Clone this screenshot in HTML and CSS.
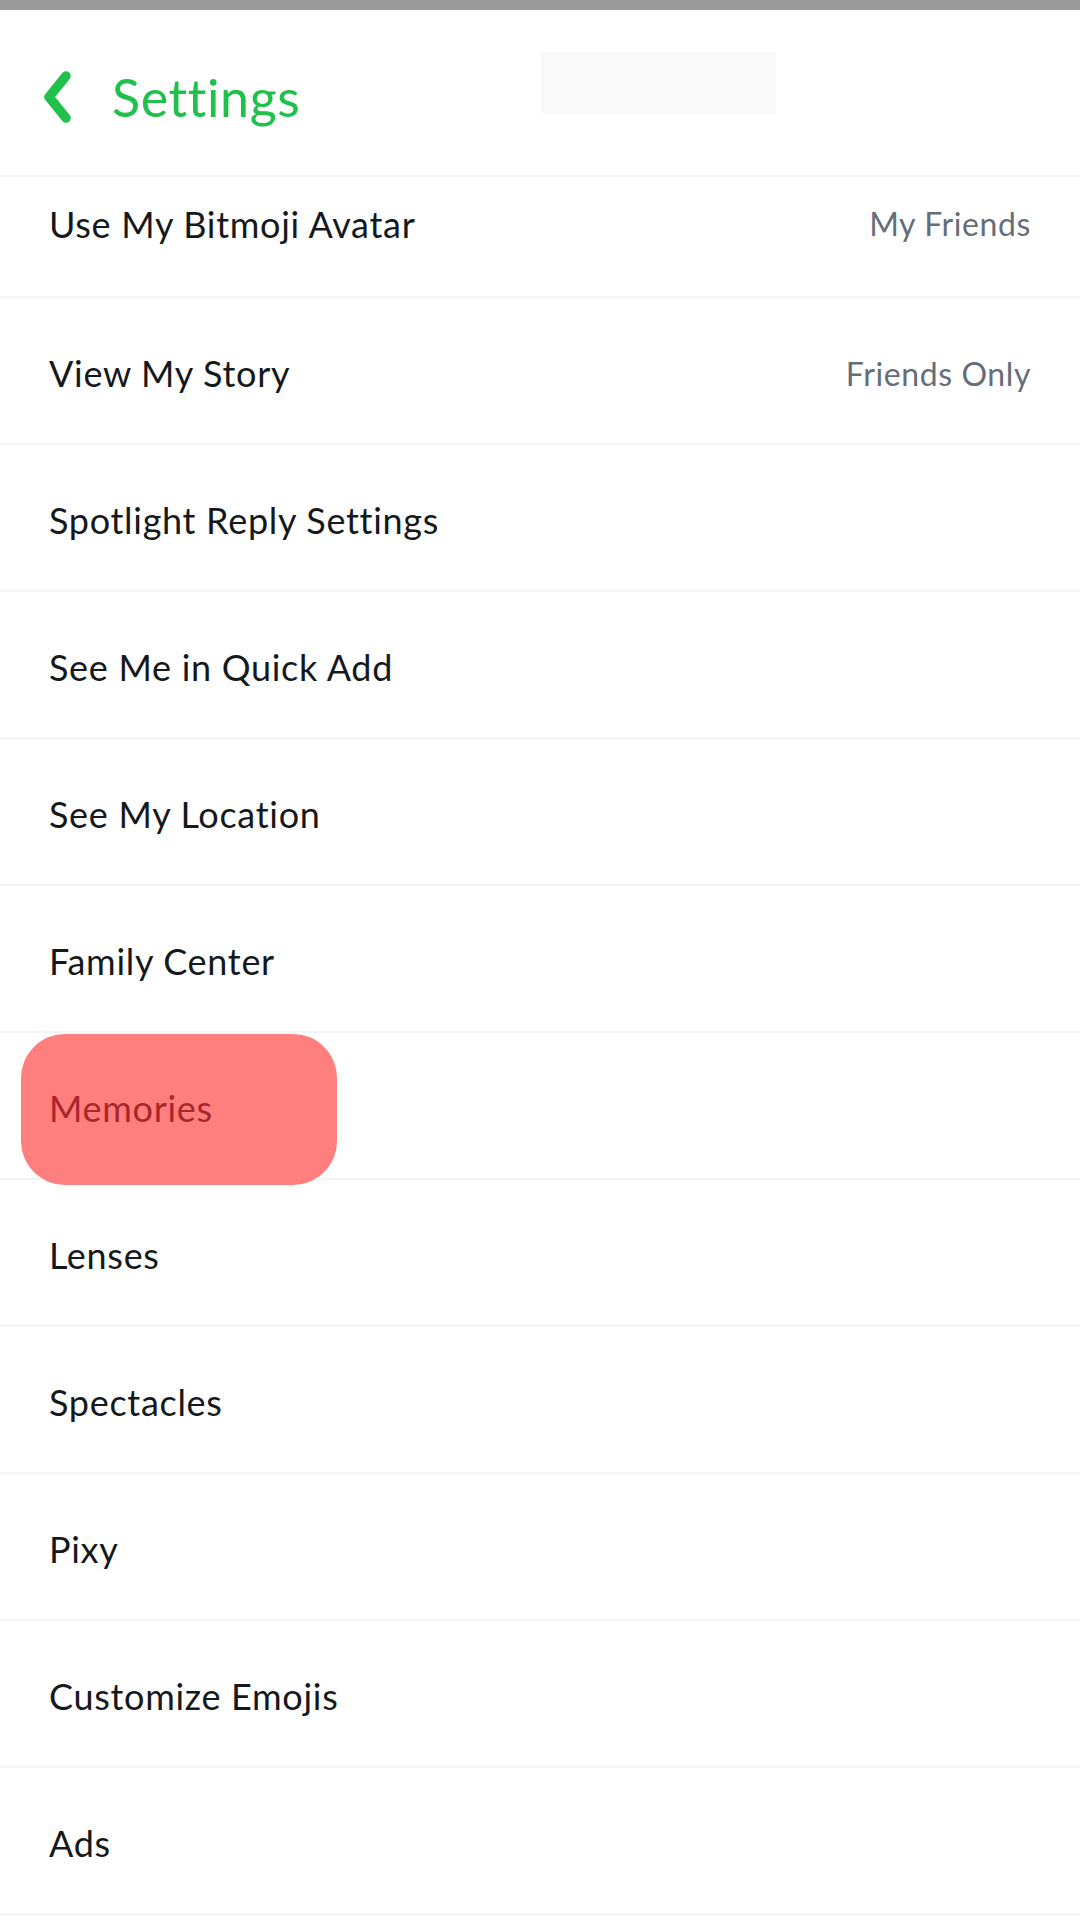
FILE: index.html
```html
<!DOCTYPE html>
<html>
<head>
<meta charset="utf-8">
<link rel="stylesheet" href="styles.css">
</head>
<body>
<div class="topbar"></div>
<header class="header">
  <svg class="back" width="40" height="56" viewBox="0 0 40 56">
    <path d="M26 7 L9 28 L26 49" fill="none" stroke="#1fc14a" stroke-width="9.5" stroke-linecap="round" stroke-linejoin="round"/>
  </svg>
  <h1 class="title">Settings</h1>
  <div class="placeholder"></div>
</header>
<main class="list">
  <div class="row first"><span class="label">Use My Bitmoji Avatar</span><span class="value">My Friends</span></div>
  <div class="row"><span class="label">View My Story</span><span class="value">Friends Only</span></div>
  <div class="row"><span class="label">Spotlight Reply Settings</span></div>
  <div class="row"><span class="label">See Me in Quick Add</span></div>
  <div class="row"><span class="label">See My Location</span></div>
  <div class="row"><span class="label">Family Center</span></div>
  <div class="row highlighted"><span class="hl"></span><span class="label">Memories</span></div>
  <div class="row"><span class="label">Lenses</span></div>
  <div class="row"><span class="label">Spectacles</span></div>
  <div class="row"><span class="label">Pixy</span></div>
  <div class="row"><span class="label">Customize Emojis</span></div>
  <div class="row"><span class="label">Ads</span></div>
</main>
</body>
</html>
```
FILE: styles.css
```css
html, body {
  margin: 0;
  padding: 0;
  background: #ffffff;
  font-family: "Lato", "Noto Sans", sans-serif;
  width: 1080px;
  height: 1920px;
  overflow: hidden;
}
.topbar {
  height: 10px;
  background: #9a9a9a;
}
.header {
  height: 167px;
  display: flex;
  align-items: center;
  padding-left: 40px;
  border-bottom: 2px solid #f3f4f5;
  box-sizing: border-box;
}
.back {
  display: block;
  margin-top: 8px;
}
.title {
  margin: 0 0 0 32px;
  font-size: 52px;
  font-weight: 400;
  color: #1fc14a;
  letter-spacing: 0.6px;
  padding-top: 8px;
}
.placeholder {
  width: 235px;
  height: 61px;
  background: #f9f9f9;
  margin-left: 241px;
  margin-bottom: 20px;
}
.list {
  display: flex;
  flex-direction: column;
}
.row {
  border-bottom: 2px solid #f3f4f5;
  display: flex;
  align-items: center;
  justify-content: space-between;
  padding: 5px 49px 0;
  box-sizing: content-box;
  position: relative;
  height: 140px;
}
.row.first {
  height: 119px;
  padding-top: 0;
  align-items: flex-start;
}
.row.first .label {
  margin-top: 25px;
}
.row.first .value {
  margin-top: 27px;
}
.label {
  font-size: 36px;
  color: #16191c;
  letter-spacing: 0.7px;
  position: relative;
}
.value {
  font-size: 32px;
  color: #656d78;
  letter-spacing: 0.6px;
}
.hl {
  position: absolute;
  left: 21px;
  top: 1px;
  width: 316px;
  height: 151px;
  border-radius: 44px;
  background: #ff7f7f;
}
.highlighted .label {
  color: #a8262c;
}
```
